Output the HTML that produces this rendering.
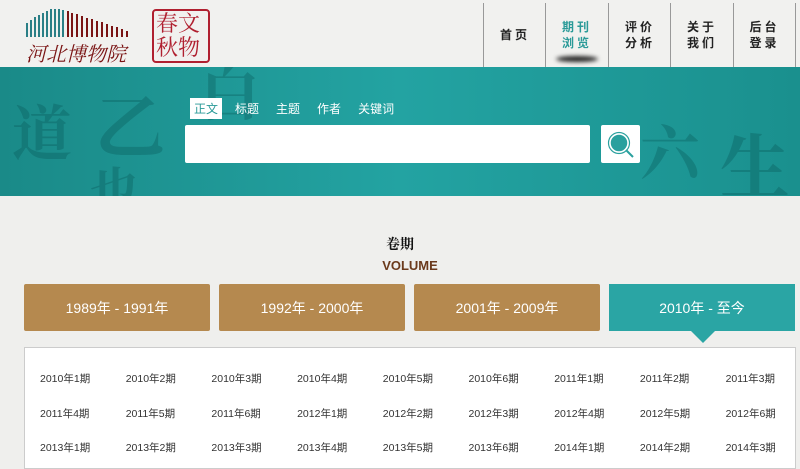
<!DOCTYPE html>
<html><head><meta charset="utf-8"><style>
*{margin:0;padding:0;box-sizing:border-box}
body{width:800px;height:469px;overflow:hidden;background:#efefed;font-family:"Liberation Sans","Noto Sans CJK SC",sans-serif;position:relative}
.hdr{position:absolute;left:0;top:0;width:800px;height:67px;background:#f1f1ef}
.nav{position:absolute;top:3px;height:64px;border-left:1px solid #999;width:63px;text-align:center;font-size:12px;font-weight:bold;color:#222;letter-spacing:3px;display:flex;align-items:center;justify-content:center;line-height:16px}
.band{position:absolute;left:0;top:67px;width:800px;height:129px;background:linear-gradient(90deg,#1a8a88,#23a3a2 50%,#1a908e);overflow:hidden}
.cal{position:absolute;color:rgba(10,90,88,.35);font-family:"Noto Serif CJK SC",serif;font-weight:bold}
.tabs{position:absolute;left:190px;top:98px;display:flex;gap:0;font-size:12px;color:#fff}
.tabs span{padding:2px 4px;margin-right:9px}
.btn{position:absolute;top:284px;height:47px;width:186px;background:#b5894f;color:#fff;font-size:14px;display:flex;align-items:center;justify-content:center;border-radius:2px}
.panel{position:absolute;left:24px;top:347px;width:772px;height:122px;background:#fff;border:1px solid #ccc}
.it{position:absolute;font-size:10.5px;color:#333}
</style></head><body>
<div class="hdr"></div>
<svg style="position:absolute;left:26px;top:5px" width="110" height="60">
<g stroke="#2a7f86" stroke-width="2">
<line x1="1" y1="32" x2="1" y2="18"/><line x1="5" y1="32" x2="5" y2="15"/><line x1="9" y1="32" x2="9" y2="12"/><line x1="13" y1="32" x2="13" y2="10"/><line x1="17" y1="32" x2="17" y2="8"/><line x1="21" y1="32" x2="21" y2="6"/><line x1="25" y1="32" x2="25" y2="4"/><line x1="29" y1="32" x2="29" y2="4"/><line x1="33" y1="32" x2="33" y2="4"/><line x1="37" y1="32" x2="37" y2="5"/></g>
<g stroke="#7a1414" stroke-width="2"><line x1="42" y1="32" x2="42" y2="6"/><line x1="46" y1="32" x2="46" y2="8"/><line x1="51" y1="32" x2="51" y2="9"/><line x1="56" y1="32" x2="56" y2="11"/><line x1="61" y1="32" x2="61" y2="13"/><line x1="66" y1="32" x2="66" y2="14"/><line x1="71" y1="32" x2="71" y2="16"/><line x1="76" y1="32" x2="76" y2="17"/><line x1="81" y1="32" x2="81" y2="19"/><line x1="86" y1="32" x2="86" y2="21"/><line x1="91" y1="32" x2="91" y2="22"/><line x1="96" y1="32" x2="96" y2="24"/><line x1="101" y1="32" x2="101" y2="26"/></g>
<text x="0" y="56" font-size="20" fill="#7a1414" font-family="Noto Serif CJK SC" font-style="italic">河北博物院</text></svg>
<div style="position:absolute;left:152px;top:9px;width:58px;height:54px;border:2px solid #b02030;border-radius:4px;color:#b02030;font-size:22px;line-height:24px;font-family:'Noto Serif CJK SC',serif;padding-left:2px">春文<br>秋物</div>
<div class="nav" style="left:483px">首页</div>
<div class="nav" style="left:545px;color:#2a9a98">期刊<br>浏览<div style="position:absolute;bottom:5px;left:10px;width:42px;height:6px;border-radius:50%;background:#222;filter:blur(2px)"></div></div>
<div class="nav" style="left:608px">评价<br>分析</div>
<div class="nav" style="left:670px">关于<br>我们</div>
<div class="nav" style="left:733px;border-right:1px solid #999">后台<br>登录</div>
<div class="band">
<div class="cal" style="left:12px;top:20px;font-size:60px">道</div>
<div class="cal" style="left:95px;top:5px;font-size:70px">乙</div>
<div class="cal" style="left:200px;top:-20px;font-size:60px">白</div>
<div class="cal" style="left:640px;top:40px;font-size:60px">六</div>
<div class="cal" style="left:720px;top:45px;font-size:70px">生</div>
<div class="cal" style="left:90px;top:85px;font-size:50px">也</div>
</div>
<div class="tabs"><span style="background:#fff;color:#2a9a98">正文</span><span>标题</span><span>主题</span><span>作者</span><span>关键词</span></div>
<div style="position:absolute;left:185px;top:125px;width:405px;height:38px;background:#fff;border-radius:2px"></div>
<div style="position:absolute;left:601px;top:125px;width:39px;height:38px;background:#fff;border-radius:2px">
<svg width="39" height="38"><circle cx="18" cy="18" r="9" fill="#2aa09e" stroke="#fff" stroke-width="1.5"/><circle cx="18" cy="18" r="10.5" fill="none" stroke="#2aa09e" stroke-width="1.2"/><line x1="25" y1="25" x2="32" y2="32" stroke="#2aa09e" stroke-width="2"/></svg></div>
<div style="position:absolute;left:0;width:800px;top:234px;text-align:center;font-size:14px;font-weight:bold;color:#111;font-family:'Noto Serif CJK SC',serif">卷期</div>
<div style="position:absolute;left:0;width:820px;top:258px;text-align:center;font-size:13px;font-weight:bold;color:#6b3a1c">VOLUME</div>
<div class="btn" style="left:24px">1989年 - 1991年</div>
<div class="btn" style="left:219px">1992年 - 2000年</div>
<div class="btn" style="left:414px">2001年 - 2009年</div>
<div class="btn" style="left:609px;background:#2aa5a4;border-radius:0">2010年 - 至今</div>
<div style="position:absolute;left:691px;top:331px;width:0;height:0;border-left:12px solid transparent;border-right:12px solid transparent;border-top:12px solid #2aa5a4"></div>
<div class="panel"></div>
<div id="g"></div>
<script>
var L=[];for(var y=2010;y<=2014;y++)for(var i=1;i<=6;i++)L.push(y+"年"+i+"期");
var h="";for(var k=0;k<27;k++){var r=Math.floor(k/9),c=k%9;h+='<div class="it" style="left:'+(40+c*85.7)+'px;top:'+(371+r*34.5)+'px">'+L[k]+'</div>';}
document.getElementById("g").innerHTML=h;
</script>
</body></html>
